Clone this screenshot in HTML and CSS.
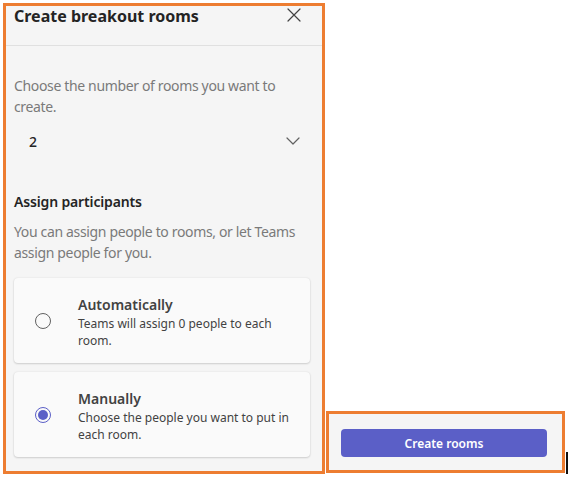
FILE: index.html
```html
<!DOCTYPE html>
<html lang="en">
<head>
<meta charset="utf-8">
<title>Create breakout rooms</title>
<link rel="stylesheet" href="styles.css">
</head>
<body>
<div class="stage">
  <section class="panel">
    <header class="panel-header">
      <h1 class="panel-title">Create breakout rooms</h1>
      <button class="icon-btn" aria-label="Close">
        <svg width="14" height="14" viewBox="0 0 14 14"><path d="M1 1 L13 13 M13 1 L1 13" stroke="#424242" stroke-width="1.2" fill="none" stroke-linecap="round"/></svg>
      </button>
    </header>
    <div class="panel-body">
      <p class="hint">Choose the number of rooms you want to create.</p>
      <div class="select">
        <span class="select-value">2</span>
        <svg width="14" height="8" viewBox="0 0 14 8"><path d="M1 1 L7 7 L13 1" stroke="#616161" stroke-width="1.2" fill="none" stroke-linecap="round" stroke-linejoin="round"/></svg>
      </div>
      <h2 class="section-title">Assign participants</h2>
      <p class="hint">You can assign people to rooms, or let Teams assign people for you.</p>
      <div class="options">
        <label class="card">
          <span class="radio"></span>
          <span class="card-text">
            <span class="card-title">Automatically</span>
            <span class="card-desc">Teams will assign 0 people to each room.</span>
          </span>
        </label>
        <label class="card">
          <span class="radio checked"></span>
          <span class="card-text">
            <span class="card-title">Manually</span>
            <span class="card-desc">Choose the people you want to put in each room.</span>
          </span>
        </label>
      </div>
    </div>
  </section>
  <footer class="footer-box">
    <button class="primary-btn">Create rooms</button>
  </footer>
  <span class="stray-bar"></span>
</div>
</body>
</html>
```
FILE: styles.css
```css
* { box-sizing: border-box; }
html, body { margin: 0; padding: 0; background: #ffffff; }
body {
  font-family: "Noto Sans", "Open Sans", "Liberation Sans", sans-serif;
  color: #242424;
}
.stage {
  display: flex;
  align-items: flex-start;
  gap: 1px;
  padding: 3px 0 0 3px;
}
.panel {
  width: 323px;
  height: 471px;
  border: 3px solid #ed7d31;
  background: #f5f5f5;
  display: flex;
  flex-direction: column;
}
.panel-header {
  height: 40px;
  border-bottom: 1px solid #e0e0e0;
  display: flex;
  align-items: flex-start;
  justify-content: space-between;
  padding: 0 21px 0 8px;
}
.panel-title {
  margin: 0;
  font-size: 16px;
  font-weight: 700;
  line-height: 20px;
  color: #242424;
}
.icon-btn {
  border: 0;
  background: none;
  padding: 0;
  margin-top: 2px;
  width: 14px;
  height: 14px;
  display: flex;
}
.panel-body {
  padding: 29px 8px 0 8px;
  display: flex;
  flex-direction: column;
}
.hint {
  margin: 0;
  font-size: 14px;
  line-height: 21px;
  color: #7a7a7a;
  letter-spacing: -0.35px;
}
.select {
  height: 38px;
  margin-top: 5px;
  display: flex;
  align-items: center;
  justify-content: space-between;
  padding: 0 14px 0 15px;
  font-size: 14px;
  color: #242424;
}
.select-value { font-weight: 500; }
.section-title {
  margin: 32px 0 9px;
  font-size: 14px;
  font-weight: 600;
  line-height: 20px;
  color: #242424;
  letter-spacing: -0.15px;
}
.options {
  display: flex;
  flex-direction: column;
  gap: 9px;
  margin-top: 15px;
}
.card {
  height: 85px;
  width: 296px;
  background: #fafafa;
  border-radius: 4px;
  box-shadow: 0 1px 2px rgba(0,0,0,0.14), 0 0 2px rgba(0,0,0,0.10);
  display: flex;
  align-items: center;
  padding: 0 14px 0 21px;
}
.radio {
  width: 16px;
  height: 16px;
  border-radius: 50%;
  border: 1px solid #616161;
  flex: none;
  margin-right: 27px;
  position: relative;
}
.radio.checked {
  border-color: #5b5fc7;
}
.radio.checked::after {
  content: "";
  position: absolute;
  left: 2px;
  top: 2px;
  width: 10px;
  height: 10px;
  border-radius: 50%;
  background: #5b5fc7;
}
.card-text {
  display: flex;
  flex-direction: column;
  padding-top: 3px;
}
.card-title {
  font-size: 14px;
  font-weight: 600;
  line-height: 20px;
  color: #424242;
}
.card-desc {
  font-size: 12px;
  line-height: 17px;
  color: #424242;
}
.footer-box {
  width: 239px;
  height: 62px;
  margin-top: 408px;
  border: 3px solid #ed7d31;
  background: #f5f5f5;
  padding: 15px 15px 0 12px;
}
.primary-btn {
  width: 206px;
  height: 28px;
  border: 0;
  border-radius: 4px;
  background: #5b5fc7;
  color: #ffffff;
  font-family: inherit;
  font-size: 12px;
  font-weight: 600;
}
.stray-bar {
  width: 2px;
  height: 22px;
  margin-top: 449px;
  background: #111111;
}
```
